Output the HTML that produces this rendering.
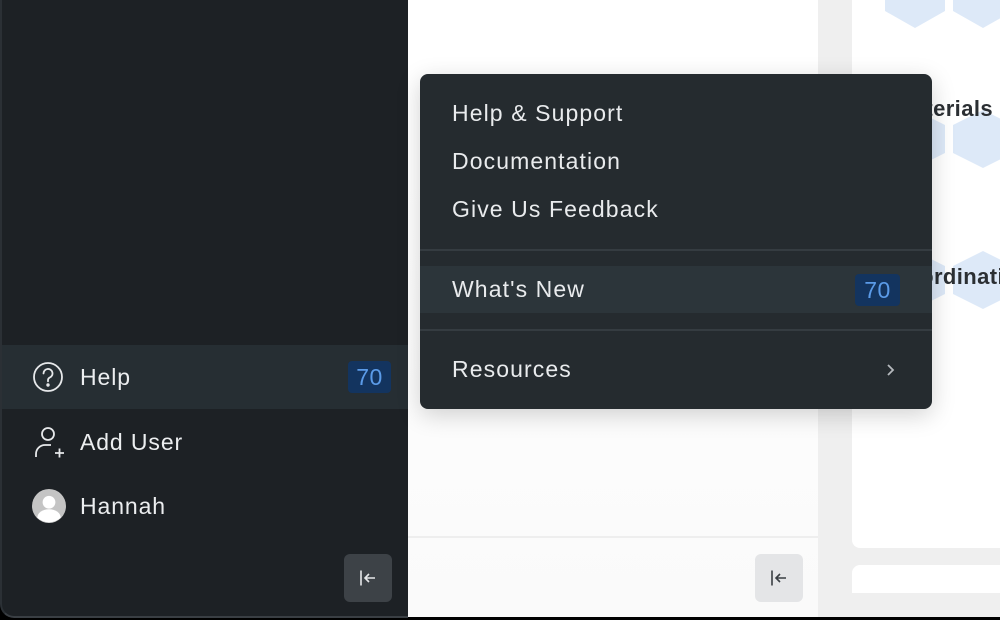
<!DOCTYPE html>
<html><head><style>
*{margin:0;padding:0;box-sizing:border-box}
body{width:1000px;height:620px;overflow:hidden;background:#000;font-family:"Liberation Sans",sans-serif;position:relative}
.abs{position:absolute}
#side{left:0;top:0;width:408px;height:618px;background:#1d2125;border-radius:0 0 0 14px;border-left:2px solid #2b3035;border-bottom:2px solid #3a3f44}
#mid{left:408px;top:0;width:410px;height:617px;background:linear-gradient(#fff,#fff 30%,#fafafa)}
#gap{left:818px;top:0;width:182px;height:617px;background:#efefef}
#card{left:852px;top:0;width:160px;height:548px;background:#fff;border-radius:0 0 0 8px;overflow:hidden}
#card2{left:852px;top:565px;width:160px;height:28px;background:#fff;border-radius:8px 0 0 0}
.row{position:absolute;left:2px;width:406px;height:64px;color:#eceef0;font-size:23px;letter-spacing:0.9px;display:flex;align-items:center}
.row span{position:absolute;left:78px}
.badge{position:absolute;background:#13345f;color:#5b9be8;font-size:23px;letter-spacing:0.5px;border-radius:4px;width:44px;height:32px;text-align:center;line-height:32px}
.btn{position:absolute;width:48px;height:48px;border-radius:6px;display:flex;align-items:center;justify-content:center}
#menu{left:420px;top:74px;width:512px;height:335px;background:#252b2f;border-radius:8px;box-shadow:0 6px 24px rgba(0,0,0,.18)}
.mi{position:absolute;left:32px;color:#e9ebed;font-size:23px;letter-spacing:1.1px}
.sep{position:absolute;left:0;width:512px;height:2px;background:#353c41}
.bold{position:absolute;font-weight:bold;font-size:22px;color:#2b2f33;letter-spacing:0.4px}
</style></head><body>
<div id="side" class="abs"></div>
<div id="mid" class="abs"></div>
<div class="abs" style="left:408px;top:536px;width:410px;height:2px;background:#eeeeee"></div>
<div id="gap" class="abs"></div>
<div id="card" class="abs">
<svg class="abs" style="left:0;top:0" width="160" height="548">
<g fill="#dde9f8">
<polygon points="63,-32 93,-17 93,11 63,28 33,11 33,-17"/>
<polygon points="131,-32 161,-17 161,11 131,28 101,11 101,-17"/>
<polygon points="63,110 93,125 93,153 63,168 33,153 33,125"/>
<polygon points="131,110 161,125 161,153 131,168 101,153 101,125"/>
<polygon points="63,251 93,266 93,294 63,309 33,294 33,266"/>
<polygon points="131,251 161,266 161,294 131,309 101,294 101,266"/>
</g></svg>
<div class="bold" style="left:42px;top:96px">Materials</div>
<div class="bold" style="left:38px;top:264px">Coordination</div>
</div>
<div id="card2" class="abs"></div>

<div class="row" style="top:345px;background:#262e33"><svg class="abs" style="left:30px" width="32" height="32" viewBox="0 0 32 32" fill="none" stroke="#e6e8ea" stroke-width="1.8"><circle cx="16" cy="16" r="14"/><path d="M11.5 12.5a4.5 4.5 0 1 1 6 4.2c-1 .5-1.5 1.3-1.5 2.5v1.2" stroke-linecap="round"/><circle cx="16" cy="24" r="0.8" fill="#e6e8ea"/></svg><span>Help</span><div class="badge" style="left:346px;top:16px;width:43px">70</div></div>
<div class="row" style="top:410px"><svg class="abs" style="left:31px" width="34" height="34" viewBox="0 0 34 34" fill="none" stroke="#e6e8ea" stroke-width="1.8"><circle cx="15" cy="9" r="6"/><path d="M3 32v-3a9 9 0 0 1 9-9h6"/><path d="M22 28h9M26.5 23.5v9"/></svg><span>Add User</span></div>
<div class="row" style="top:474px"><svg class="abs" style="left:30px" width="34" height="34" viewBox="0 0 32 32"><circle cx="16" cy="16" r="16" fill="#c4c4c4"/><circle cx="16" cy="12.5" r="6" fill="#fff"/><path d="M5 27a11 8 0 0 1 22 0a16 16 0 0 1-22 0z" fill="#fff"/></svg><span>Hannah</span></div>

<div class="btn" style="left:344px;top:554px;background:#3d4247"><svg width="18" height="18" viewBox="0 0 18 18" fill="none" stroke="#e6e8ea" stroke-width="1.6"><path d="M2 1.5v15M16 9H6M10 5l-4 4 4 4"/></svg></div>
<div class="btn" style="left:755px;top:554px;background:#e4e5e7"><svg width="18" height="18" viewBox="0 0 18 18" fill="none" stroke="#3a3f44" stroke-width="1.6"><path d="M2 1.5v15M16 9H6M10 5l-4 4 4 4"/></svg></div>

<div id="menu" class="abs">
<div class="mi" style="top:26px">Help &amp; Support</div>
<div class="mi" style="top:74px">Documentation</div>
<div class="mi" style="top:122px">Give Us Feedback</div>
<div class="sep" style="top:175px"></div>
<div class="abs" style="left:0;top:192px;width:512px;height:47px;background:#2c353a"></div>
<div class="mi" style="top:202px">What's New</div>
<div class="badge" style="left:435px;top:200px;width:45px;height:32px">70</div>
<div class="sep" style="top:255px"></div>
<div class="mi" style="top:282px">Resources</div>
<svg class="abs" style="left:465px;top:289px" width="12" height="14" viewBox="0 0 12 14" fill="none" stroke="#b5b9bd" stroke-width="1.8"><path d="M3 2l5 5-5 5"/></svg>
</div>
</body></html>
